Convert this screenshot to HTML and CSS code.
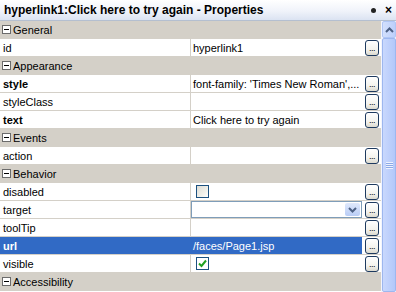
FILE: index.html
```html
<!DOCTYPE html>
<html>
<head>
<meta charset="utf-8">
<link rel="stylesheet" href="styles.css">
</head>
<body>
<div class="win">
  <div class="titlebar">
    <span class="title">hyperlink1:Click here to try again - Properties</span>
    <span class="tools"><span class="dot"></span><span class="close">×</span></span>
  </div>
  <div class="main">
    <div class="sheet">
      <div class="cat"><span class="minus"></span>General</div>
      <div class="row"><div class="name">id</div><div class="val">hyperlink1</div><div class="btncell"><span class="dots">...</span></div></div>
      <div class="cat"><span class="minus"></span>Appearance</div>
      <div class="row"><div class="name bold">style</div><div class="val">font-family: 'Times New Roman',...</div><div class="btncell"><span class="dots">...</span></div></div>
      <div class="row"><div class="name">styleClass</div><div class="val"></div><div class="btncell"><span class="dots">...</span></div></div>
      <div class="row"><div class="name bold">text</div><div class="val">Click here to try again</div><div class="btncell"><span class="dots">...</span></div></div>
      <div class="cat"><span class="minus"></span>Events</div>
      <div class="row"><div class="name">action</div><div class="val"></div><div class="btncell"><span class="dots">...</span></div></div>
      <div class="cat"><span class="minus"></span>Behavior</div>
      <div class="row"><div class="name">disabled</div><div class="val"><span class="check"></span></div><div class="btncell"><span class="dots">...</span></div></div>
      <div class="row"><div class="name">target</div><div class="val combo-cell"><div class="combo"><span class="combo-btn"><svg width="9" height="6" viewBox="0 0 9 6"><path d="M1 1 L4.5 4.5 L8 1" fill="none" stroke="#4d6185" stroke-width="2"/></svg></span></div></div><div class="btncell"><span class="dots">...</span></div></div>
      <div class="row"><div class="name">toolTip</div><div class="val"></div><div class="btncell"><span class="dots">...</span></div></div>
      <div class="row sel"><div class="name bold">url</div><div class="val">/faces/Page1.jsp</div><div class="btncell"><span class="dots">...</span></div></div>
      <div class="row"><div class="name">visible</div><div class="val"><span class="check on"><svg width="9" height="9" viewBox="0 0 9 9"><path d="M1 4.5 L3.5 7 L8 1.5" fill="none" stroke="#21a121" stroke-width="2"/></svg></span></div><div class="btncell"><span class="dots">...</span></div></div>
      <div class="cat"><span class="minus"></span>Accessibility</div>
    </div>
    <div class="scroll">
      <div class="sarrow"><svg width="9" height="6" viewBox="0 0 9 6"><path d="M1 5 L4.5 1.5 L8 5" fill="none" stroke="#4d6185" stroke-width="2"/></svg></div>
      <div class="thumb"><span class="grip"></span></div>
    </div>
  </div>
</div>
</body>
</html>
```
FILE: styles.css
```css
* { box-sizing: border-box; }
html, body { margin: 0; padding: 0; }
body {
  width: 396px; height: 292px; overflow: hidden;
  font-family: "Liberation Sans", Arial, sans-serif;
  font-size: 11px; color: #000; background: #d4d0c8;
}
.win { width: 396px; height: 292px; display: flex; flex-direction: column; }
.titlebar {
  height: 21px; flex: none;
  display: flex; align-items: center; justify-content: space-between;
  padding: 0 4px 0 4px;
  background: linear-gradient(to bottom, #ffffff 0%, #f0f3fa 55%, #dbe3f2 100%);
  border-bottom: 1px solid #b4bfd0;
}
.title { font-weight: bold; font-size: 12px; }
.tools { display: flex; align-items: center; gap: 9px; }
.dot { width: 5px; height: 5px; border-radius: 50%; background: #222; }
.close { font-weight: bold; font-size: 12px; line-height: 1; }
.main { flex: 1; display: flex; }
.sheet { width: 381px; flex: none; background: #fff; }
.cat {
  height: 18px; background: #d4d0c8; display: flex; align-items: center;
  padding-left: 2px; border-bottom: 1px solid #d4d0c8;
}
.minus {
  width: 9px; height: 9px; border: 1px solid #6b6b6b; background: #fff;
  margin-right: 2px; position: relative; flex: none;
}
.minus::after {
  content: ""; position: absolute; left: 1px; top: 3px; width: 5px; height: 1px; background: #000;
}
.row { height: 18px; display: flex; border-bottom: 1px solid #d4d0c8; background: #fff; }
.name { width: 191px; flex: none; border-right: 1px solid #d4d0c8; padding-left: 3px; display: flex; align-items: center; }
.bold { font-weight: bold; }
.val { flex: 1; padding-left: 2px; display: flex; align-items: center; white-space: nowrap; overflow: hidden; }
.btncell { width: 19px; flex: none; display: flex; align-items: center; justify-content: flex-start; padding-left: 3px; background: #fff; }
.dots {
  width: 14px; height: 16px; border: 1px solid #1e3a5f; border-radius: 3px;
  background: linear-gradient(to bottom, #ffffff 0%, #f4f3ee 60%, #dcdad0 100%);
  font-size: 9px; line-height: 1; display: flex; align-items: flex-end; justify-content: center;
  padding-bottom: 2px; letter-spacing: -0.5px;
}
.sel .name, .sel .val { background: #316ac5; color: #fff; }
.sel .name { border-right-color: #316ac5; }
.check {
  width: 13px; height: 13px; border: 1px solid #1c5180; margin-left: 3px;
  background: linear-gradient(135deg, #dcdcd6 0%, #f0f0ea 60%, #ffffff 100%);
  display: flex; align-items: center; justify-content: center;
}
.check.on { background: #fff; }
.combo-cell { padding-left: 0; }
.combo {
  flex: 1; height: 17px; border: 1px solid #7f9db9; background: #fff;
  display: flex; justify-content: flex-end; align-items: stretch; padding: 1px;
}
.combo-btn {
  width: 15px; background: linear-gradient(to bottom, #dfe8fb, #b9cdf6);
  border-radius: 2px; display: flex; align-items: center; justify-content: center;
}
.scroll {
  flex: 1; display: flex; flex-direction: column; background: #f3f5fd;
  padding: 0 0 0 1px;
}
.sarrow {
  height: 17px; flex: none; border: 1px solid #b0c6f5; border-radius: 2px;
  background: linear-gradient(to right, #d3e0fd, #bccffb);
  display: flex; align-items: center; justify-content: center;
}
.thumb {
  flex: 1; border: 1px solid #9db7ef; border-radius: 2px;
  background: linear-gradient(to right, #c9d8fd, #b3c8fa);
  display: flex; align-items: center; justify-content: center;
}
.grip {
  width: 7px; height: 7px;
  background: repeating-linear-gradient(to bottom, #eef3fe 0 1px, #8ca9e6 1px 2px);
}
```
